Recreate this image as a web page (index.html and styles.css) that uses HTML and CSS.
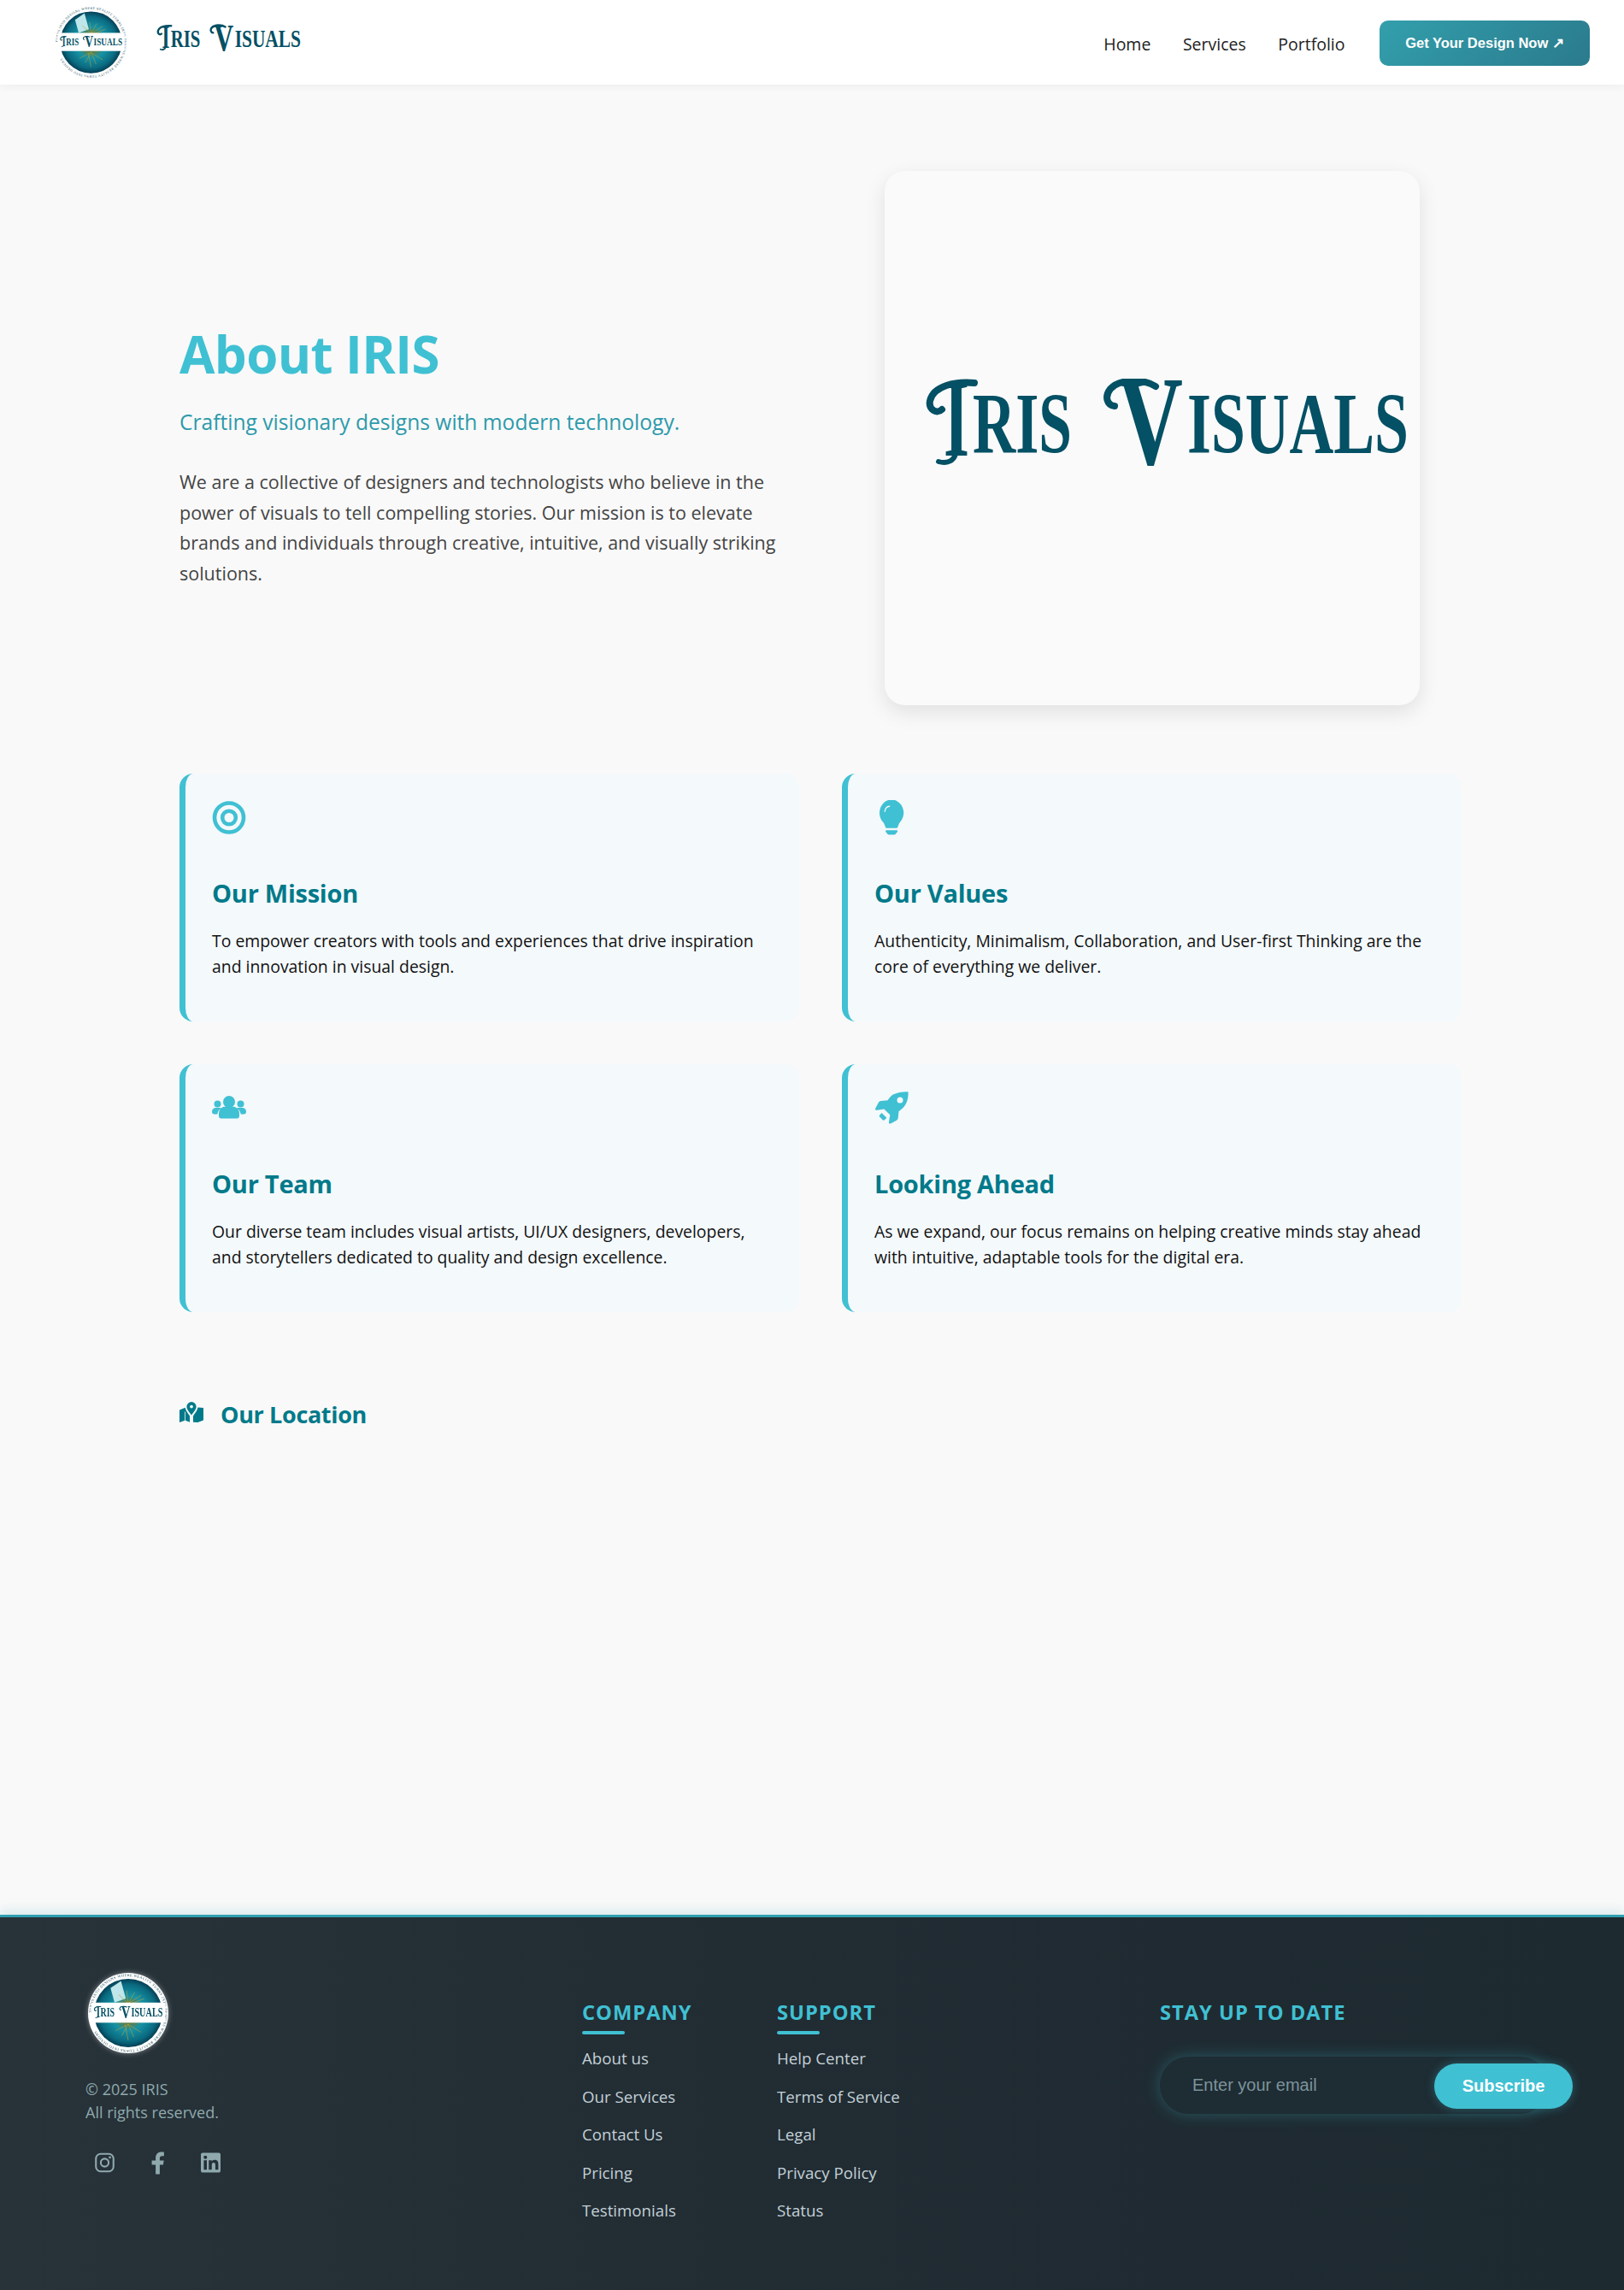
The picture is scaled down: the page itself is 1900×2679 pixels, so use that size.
FILE: index.html
```html
<!DOCTYPE html>
<html lang="en">
<head>
<meta charset="utf-8">
<title>About IRIS</title>
<link rel="stylesheet" href="styles.css">
</head>
<body>
<svg class="defs" width="0" height="0" aria-hidden="true">
  <defs>
    <radialGradient id="iris" cx="50%" cy="50%" r="50%">
      <stop offset="0" stop-color="#123f34"/>
      <stop offset=".26" stop-color="#6f7a30"/>
      <stop offset=".5" stop-color="#1793a6"/>
      <stop offset=".84" stop-color="#0a6a80"/>
      <stop offset="1" stop-color="#043f55"/>
    </radialGradient>
    <symbol id="wordmark" viewBox="0 0 566 102">
      <g fill="#045064" font-family="'Liberation Serif', serif" font-weight="700">
        <text x="22" y="90" font-size="130" textLength="30" lengthAdjust="spacingAndGlyphs">I</text>
        <path d="M58 5C36 3 10 8 6 26c-2 10 8 16 14 10" fill="none" stroke="#045064" stroke-width="8" stroke-linecap="round"/>
        <path d="M36 88c-2 8-10 12-20 9" fill="none" stroke="#045064" stroke-width="6" stroke-linecap="round"/>
        <text x="56" y="87" font-size="102" textLength="116" lengthAdjust="spacingAndGlyphs">RIS</text>
        <text x="226" y="101" font-size="150" textLength="76" lengthAdjust="spacingAndGlyphs">V</text>
        <path d="M270 9C256 0 228 0 217 12c-7 9-4 19 5 20" fill="none" stroke="#045064" stroke-width="8" stroke-linecap="round"/>
        <text x="307" y="87" font-size="102" textLength="259" lengthAdjust="spacingAndGlyphs">ISUALS</text>
      </g>
    </symbol>
    <symbol id="seal" viewBox="0 0 100 100">
      <circle cx="50" cy="50" r="50" fill="#fff"/>
      <path id="ring" d="M50 50m-45.600 0a45.600 45.600 0 1 1 91.200 0a45.600 45.600 0 1 1-91.200 0" fill="none"/>
      <text font-family="'Liberation Serif', serif" font-size="4.600" fill="#24505c" letter-spacing=".5"><textPath href="#ring">TURNS INTO DESIGNS WHERE REALITY TURNS INTO DESIGNS WHERE REALITY TURNS INTO DESIGNS</textPath></text>
      <circle cx="50" cy="50" r="42.500" fill="url(#iris)"/>
      <path d="M28 19l13-9 6 22-14 5z" fill="#bfe6ea"/>
      <g stroke="#b6a23c" stroke-width=".8" opacity=".8" fill="none">
        <path d="M50 38L48 22M50 38L58 24M50 38L66 28M50 38L38 27M54 38L70 32M50 64L42 78M50 64L57 80M50 64L34 72M50 64L66 74M46 64L50 84"/>
      </g>
      <rect x="4" y="37" width="92" height="25" fill="#fff"/>
      <use href="#wordmark" x="7" y="41" width="86" height="16"/>
    </symbol>
  </defs>
</svg>

<header class="site-header">
  <a class="brand" href="#">
    <svg class="brand-seal"><use href="#seal"/></svg>
    <svg class="brand-word"><use href="#wordmark"/></svg>
  </a>
  <nav class="site-nav">
    <a href="#">Home</a>
    <a href="#">Services</a>
    <a href="#">Portfolio</a>
    <a class="cta" href="#">Get Your Design Now ↗</a>
  </nav>
</header>

<main class="content">
  <section class="hero">
    <div class="hero-text">
      <h1>About IRIS</h1>
      <p class="tagline">Crafting visionary designs with modern technology.</p>
      <p class="intro">We are a collective of designers and technologists who believe in the power of visuals to tell compelling stories. Our mission is to elevate brands and individuals through creative, intuitive, and visually striking solutions.</p>
    </div>
    <div class="hero-media">
      <div class="hero-card">
        <svg class="hero-word"><use href="#wordmark"/></svg>
      </div>
    </div>
  </section>

  <section class="cards">
    <article class="card">
      <svg class="card-icon" viewBox="0 0 40 40"><circle cx="20" cy="20" r="17" fill="none" stroke="currentColor" stroke-width="4.600"/><circle cx="20" cy="20" r="7.800" fill="none" stroke="currentColor" stroke-width="4.600"/></svg>
      <h3>Our Mission</h3>
      <p>To empower creators with tools and experiences that drive inspiration and innovation in visual design.</p>
    </article>
    <article class="card">
      <svg class="card-icon" viewBox="0 0 40 40"><g transform="translate(1.300 -1) scale(2.350 2.560)"><path fill="currentColor" d="M2 6a6 6 0 1 1 10.174 4.310c-.203.196-.359.4-.453.619l-.762 1.769A.5.5 0 0 1 10.500 13h-5a.5.5 0 0 1-.46-.302l-.761-1.770a1.964 1.964 0 0 0-.453-.618A5.984 5.984 0 0 1 2 6zm3 8.500a.5.5 0 0 1 .5-.5h5a.5.5 0 0 1 0 1l-.224.447a1 1 0 0 1-.894.553H6.618a1 1 0 0 1-.894-.553L5.500 15a.5.5 0 0 1-.5-.5z"/><path fill="none" stroke="#f4f9fc" stroke-width=".55" stroke-linecap="round" d="M4.600 5.400C4.800 4 5.800 3.100 7 3"/></g></svg>
      <h3>Our Values</h3>
      <p>Authenticity, Minimalism, Collaboration, and User-first Thinking are the core of everything we deliver.</p>
    </article>
    <article class="card">
      <svg class="card-icon" viewBox="0 0 40 40"><g fill="currentColor"><circle cx="20" cy="12.500" r="7"/><circle cx="6.500" cy="15" r="4"/><circle cx="33.500" cy="15" r="4"/><path d="M8 29v-3c0-5 4-8 8-8h8c4 0 8 3 8 8v3c0 2-1 3-3 3H11c-2 0-3-1-3-3z"/><path d="M0 24c0-3 2-4.500 4.500-4.500h5c.8 0 1.300.2 1.800.5-3 1.500-4.600 3.800-5 7H3c-2 0-3-1-3-3zM40 24c0-3-2-4.500-4.500-4.500h-5c-.8 0-1.300.2-1.800.5 3 1.500 4.600 3.800 5 7H37c2 0 3-1 3-3z"/></g></svg>
      <h3>Our Team</h3>
      <p>Our diverse team includes visual artists, UI/UX designers, developers, and storytellers dedicated to quality and design excellence.</p>
    </article>
    <article class="card">
      <svg class="card-icon" viewBox="0 0 40 40"><path fill="currentColor" fill-rule="evenodd" d="M39.500 0.800c.4 5-.5 12-4.500 17-2 2.500-4.500 4.500-6.500 5.800l-.8 8c-.1 1.200-.8 2-1.800 2.600l-7 3.700c-1.200.6-2.200-.2-2-1.500l1.400-8.600-6.900-6.900-8.700 1.400c-1.300.2-2.200-.9-1.500-2l3.700-7c.6-1 1.400-1.700 2.600-1.800l8-.8c1.300-2 3.300-4.500 5.800-6.500C26.900 1.300 34.500.4 39.500.8zM30 7a3.500 3.500 0 1 0 0 7 3.500 3.500 0 0 0 0-7zM8.600 25.500l5.800 5.800-2.600 2.500c-.6.600-1.400.6-2 0l-3.700-3.700c-.6-.6-.6-1.400 0-2z"/></svg>
      <h3>Looking Ahead</h3>
      <p>As we expand, our focus remains on helping creative minds stay ahead with intuitive, adaptable tools for the digital era.</p>
    </article>
  </section>

  <section class="location">
    <h2>
      <svg class="map-icon" viewBox="0 0 28 24"><path fill="currentColor" fill-rule="evenodd" d="M14 0a5.600 5.600 0 0 1 5.600 5.600c0 3-3.200 6.800-5.600 9.800-2.400-3-5.600-6.800-5.600-9.800A5.600 5.600 0 0 1 14 0zm0 3.700a1.900 1.900 0 1 0 0 3.800 1.900 1.900 0 0 0 0-3.800zM0 9.500l6.700-2.800c.4 2.800 2.100 5.400 5.300 9.700v7.300L7 21.700V11.500h-.8v10.200L0 24zM28 7v14.500L21.400 24 16 23.700v-7.300c3.200-4.300 5-6.900 5.400-9.800z"/></svg>
      Our Location
    </h2>
  </section>
</main>

<footer class="site-footer">
  <div class="foot-brand">
    <svg class="foot-seal"><use href="#seal"/></svg>
    <p>© 2025 IRIS<br>All rights reserved.</p>
    <div class="socials">
      <svg viewBox="0 0 24 24"><rect x="1.300" y="1.300" width="21.400" height="21.400" rx="5.800" fill="none" stroke="currentColor" stroke-width="2.200"/><circle cx="12" cy="12" r="4.800" fill="none" stroke="currentColor" stroke-width="2.200"/><circle cx="18.300" cy="5.700" r="1.400" fill="currentColor"/></svg>
      <svg viewBox="0 0 24 24"><path fill="currentColor" d="M9.500 26V14.500H4.800V9.500h4.700V6.300C9.500 1.800 12.200-1 16.500-1c1.600 0 2.700.1 3.200.2v4.800h-2.300c-2 0-2.900 1-2.900 2.800v2.700h5l-.8 5h-4.200V26z"/></svg>
      <svg viewBox="0 0 24 24"><path fill="currentColor" fill-rule="evenodd" d="M2 0h20a2 2 0 0 1 2 2v20a2 2 0 0 1-2 2H2a2 2 0 0 1-2-2V2a2 2 0 0 1 2-2zm1.600 9v11.600h3.700V9zm1.900-5.700a2.100 2.100 0 1 0 0 4.300 2.100 2.100 0 0 0 0-4.300zM9.700 9v11.600h3.600v-5.800c0-1.500.6-2.900 2.400-2.900s2 1.600 2 3v5.700h3.600v-6.400c0-3.200-.9-5.500-4.500-5.500-1.800 0-3 .9-3.500 1.900V9z"/></svg>
    </div>
  </div>
  <div class="foot-col foot-company">
    <h4>COMPANY</h4>
    <a href="#">About us</a>
    <a href="#">Our Services</a>
    <a href="#">Contact Us</a>
    <a href="#">Pricing</a>
    <a href="#">Testimonials</a>
  </div>
  <div class="foot-col foot-support">
    <h4>SUPPORT</h4>
    <a href="#">Help Center</a>
    <a href="#">Terms of Service</a>
    <a href="#">Legal</a>
    <a href="#">Privacy Policy</a>
    <a href="#">Status</a>
  </div>
  <div class="foot-news">
    <h4 class="plain">STAY UP TO DATE</h4>
    <form class="news-form">
      <input type="email" placeholder="Enter your email">
      <button type="button">Subscribe</button>
    </form>
  </div>
</footer>
</body>
</html>
```
FILE: styles.css
```css
* { box-sizing: border-box; }
html, body { margin: 0; padding: 0; }
body {
  background: #f9f9f9;
  font-family: "Open Sans", "Noto Sans", sans-serif;
  color: #111;
}
a { text-decoration: none; color: inherit; }
.defs { position: absolute; }

.site-header {
  height: 99px;
  background: #fff;
  box-shadow: 0 2px 10px rgba(0, 0, 0, .05);
  display: flex;
  align-items: flex-start;
  justify-content: space-between;
  padding: 0 40px 0 63px;
}
.brand { display: flex; align-items: flex-start; gap: 33px; padding-top: 7px; }
.brand-seal { width: 87px; height: 85px; }
.brand-word { width: 169px; height: 32px; margin-top: 21px; }
.site-nav { display: flex; align-items: center; gap: 37.500px; padding-top: 24px; font-size: 19.500px; color: #222; }
.site-nav a:not(.cta) { padding-top: 2px; }
.cta {
  width: 246px;
  height: 53px;
  margin-left: 3px;
  border-radius: 10px;
  background: linear-gradient(135deg, #339fac, #2a7a8c);
  color: #fff;
  font-family: "Liberation Sans", sans-serif;
  font-size: 16.500px;
  font-weight: 700;
  display: flex;
  align-items: center;
  justify-content: center;
}

.content { padding: 101px 190px 0 210px; height: 2141px; }
.hero { display: grid; grid-template-columns: 725px 725px; column-gap: 50px; height: 625px; }
.hero-text { padding-top: 174px; }
h1 { margin: 0; font-size: 60px; line-height: 80px; font-weight: 700; letter-spacing: -.6px; color: #40c0d3; }
.tagline { margin: 23px 0 0; font-size: 24.600px; line-height: 34px; color: #2d9aab; }
.intro { margin: 35px 0 0; font-size: 21.500px; line-height: 35.600px; color: #444; max-width: 725px; }
.hero-media { display: flex; justify-content: center; }
.hero-card {
  width: 626px;
  height: 625px;
  border-radius: 24px;
  background: #fafafb;
  box-shadow: 0 8px 24px rgba(0, 0, 0, .1);
  padding: 243px 12px 0 47px;
}
.hero-word { display: block; width: 566px; height: 102px; }

.cards { display: grid; grid-template-columns: 725px 725px; gap: 50px; margin-top: 80px; }
.card {
  height: 290px;
  padding: 31px 31px 0;
  background: #f4f9fc;
  border-left: 7px solid #40c0d3;
  border-radius: 16px;
}
.card-icon { display: block; width: 40px; height: 41px; color: #40c0d3; }
.card h3 { margin: 48px 0 0; font-size: 29px; line-height: 40px; font-weight: 700; letter-spacing: -.25px; color: #007a8a; }
.card p { margin: 21px 0 0; font-size: 19.400px; line-height: 30px; color: #111; }

.location { margin-top: 100px; }
.location h2 { margin: 0; display: flex; align-items: center; gap: 20px; font-size: 27px; line-height: 40px; font-weight: 700; letter-spacing: -.35px; color: #007a8a; }
.map-icon { width: 28px; height: 24px; margin-top: -6px; }

.site-footer {
  height: 439px;
  border-top: 3px solid #2f9fb0;
  background: linear-gradient(90deg, #273239, #212c33 45%, #1d2a30);
  box-shadow: 0 -6px 12px rgba(47, 159, 176, .14);
  position: relative;
  display: flex;
  align-items: flex-start;
}
.foot-brand { width: 681px; padding: 65px 0 0 100px; }
.foot-seal { display: block; width: 94px; height: 94px; margin-left: 3px; filter: drop-shadow(0 0 3px rgba(255, 255, 255, .4)); }
.foot-brand p { margin: 29px 0 0; font-size: 18px; line-height: 27px; color: #8fa9ad; }
.socials { display: flex; gap: 39px; margin: 33px 0 0 11px; color: #8fa9ad; }
.socials svg { width: 23px; height: 24px; overflow: visible; }
.foot-col { display: flex; flex-direction: column; padding-top: 89px; }
.foot-company { width: 228px; }
.foot-support { width: 448px; }
.foot-col h4, .plain { margin: 0; font-size: 23.700px; line-height: 44px; font-weight: 700; letter-spacing: 1px; color: #40c0d3; }
.foot-col h4 { position: relative; margin-bottom: 10px; }
.foot-col h4::after { content: ""; position: absolute; left: 0; bottom: -4px; width: 50px; height: 4px; border-radius: 2px; background: #40c0d3; }
.foot-col a { font-size: 18.700px; line-height: 44.500px; color: #c3d0d6; }
.foot-news { width: 500px; padding-top: 89px; }
.news-form { position: relative; margin-top: 30px; width: 455px; height: 67px; border-radius: 34px; background: #1e2c33; box-shadow: 0 0 18px rgba(64, 192, 211, .3); }
.news-form input {
  width: 320px;
  height: 67px;
  padding: 0 0 0 38px;
  background: transparent;
  border: 0;
  outline: 0;
  font-family: "Liberation Sans", sans-serif;
  font-size: 20px;
}
.news-form input::placeholder { color: #7d949b; opacity: 1; }
.news-form button {
  position: absolute;
  top: 8px;
  left: 321px;
  width: 162px;
  height: 53px;
  border: 0;
  border-radius: 27px;
  background: #40c0d3;
  box-shadow: 0 0 12px rgba(64, 192, 211, .35);
  color: #fff;
  font-family: "Liberation Sans", sans-serif;
  font-size: 20px;
  font-weight: 700;
}
```
